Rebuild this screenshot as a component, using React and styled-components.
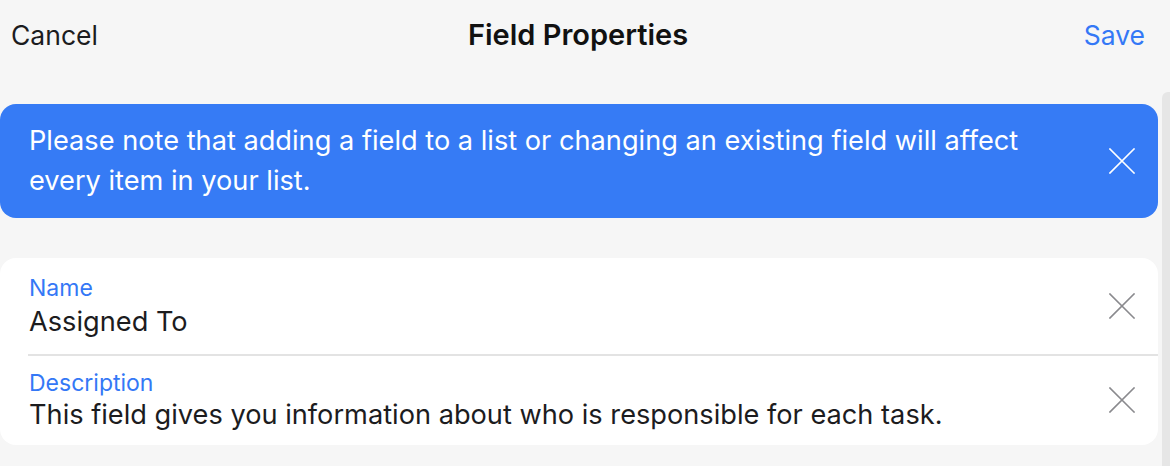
import React from "react";
import styled, { createGlobalStyle } from "styled-components";

const GlobalStyle = createGlobalStyle`
  html, body {
    margin: 0;
    padding: 0;
    background: #f6f6f6;
  }
  body {
    font-family: Inter, "Noto Sans", "Liberation Sans", sans-serif;
    -webkit-font-smoothing: antialiased;
  }
`;

const Screen = styled.div`
  width: 1170px;
  height: 466px;
  overflow: hidden;
  background: #f6f6f6;
  display: flex;
  flex-direction: column;
`;

const NavBar = styled.header`
  height: 70px;
  flex: none;
  display: grid;
  grid-template-columns: 1fr auto 1fr;
  align-items: center;
  padding: 0 25px 0 11px;
`;

const NavButton = styled.button`
  border: 0;
  background: none;
  padding: 0;
  font: inherit;
  font-size: 26.5px;
  line-height: 32px;
  color: ${({ primary }) => (primary ? "#3478f6" : "#1c1c1e")};
  justify-self: ${({ primary }) => (primary ? "end" : "start")};
  cursor: pointer;
`;

const Title = styled.h1`
  margin: 0;
  font-size: 29px;
  line-height: 34px;
  font-weight: 600;
  color: #111;
`;

const Body = styled.div`
  flex: 1;
  display: flex;
  gap: 4px;
  min-height: 0;
`;

const Content = styled.main`
  flex: 1;
  display: flex;
  flex-direction: column;
  gap: 40px;
  padding-top: 34px;
`;

const ScrollTrack = styled.div`
  width: 8px;
  margin-top: 22px;
  border-radius: 6px 0 0 0;
  background: #e6e6e6;
`;

const Banner = styled.div`
  display: flex;
  align-items: center;
  gap: 24px;
  padding: 17px 23px 17px 29px;
  border-radius: 16px;
  background: #367bf5;
  color: #fff;
`;

const BannerText = styled.p`
  flex: 1;
  margin: 0;
  font-size: 27.2px;
  line-height: 40px;
`;

const CloseButton = styled.button`
  flex: none;
  width: 26px;
  height: 26px;
  padding: 0;
  border: 0;
  background: none;
  display: flex;
  align-items: center;
  justify-content: center;
  color: ${({ light }) => (light ? "#fff" : "#8a8a8e")};
  cursor: pointer;
`;

const Card = styled.section`
  background: #fff;
  border-radius: 16px;
  padding-left: 28px;
`;

const Row = styled.div`
  display: flex;
  align-items: center;
  gap: 20px;
  padding: ${({ first }) => (first ? "15px 23px 15px 1px" : "12px 23px 13px 1px")};
  border-top: ${({ first }) => (first ? "0" : "2px solid #e3e3e3")};
`;

const Field = styled.div`
  flex: 1;
  display: flex;
  flex-direction: column;
  gap: ${({ first }) => (first ? "2px" : "0")};
`;

const Label = styled.span`
  font-size: 23px;
  line-height: 30px;
  color: #3478f6;
`;

const Value = styled.span`
  font-size: 27.2px;
  line-height: 34px;
  color: #1c1c1e;
`;

const CrossIcon = () => (
  <svg width="26" height="26" viewBox="0 0 26 26" fill="none">
    <path d="M1 1L25 25M25 1L1 25" stroke="currentColor" strokeWidth="1.6" strokeLinecap="square" />
  </svg>
);

const fields = [
  { label: "Name", value: "Assigned To" },
  {
    label: "Description",
    value: "This field gives you information about who is responsible for each task.",
  },
];

export default function App() {
  return (
    <>
      <GlobalStyle />
      <Screen>
        <NavBar>
          <NavButton>Cancel</NavButton>
          <Title>Field Properties</Title>
          <NavButton primary>Save</NavButton>
        </NavBar>
        <Body>
          <Content>
            <Banner>
              <BannerText>
                Please note that adding a field to a list or changing an existing field will affect
                <br />
                every item in your list.
              </BannerText>
              <CloseButton light aria-label="Dismiss">
                <CrossIcon />
              </CloseButton>
            </Banner>
            <Card>
              {fields.map((f, i) => (
                <Row key={f.label} first={i === 0}>
                  <Field first={i === 0}>
                    <Label>{f.label}</Label>
                    <Value>{f.value}</Value>
                  </Field>
                  <CloseButton aria-label={`Clear ${f.label}`}>
                    <CrossIcon />
                  </CloseButton>
                </Row>
              ))}
            </Card>
          </Content>
          <ScrollTrack />
        </Body>
      </Screen>
    </>
  );
}
